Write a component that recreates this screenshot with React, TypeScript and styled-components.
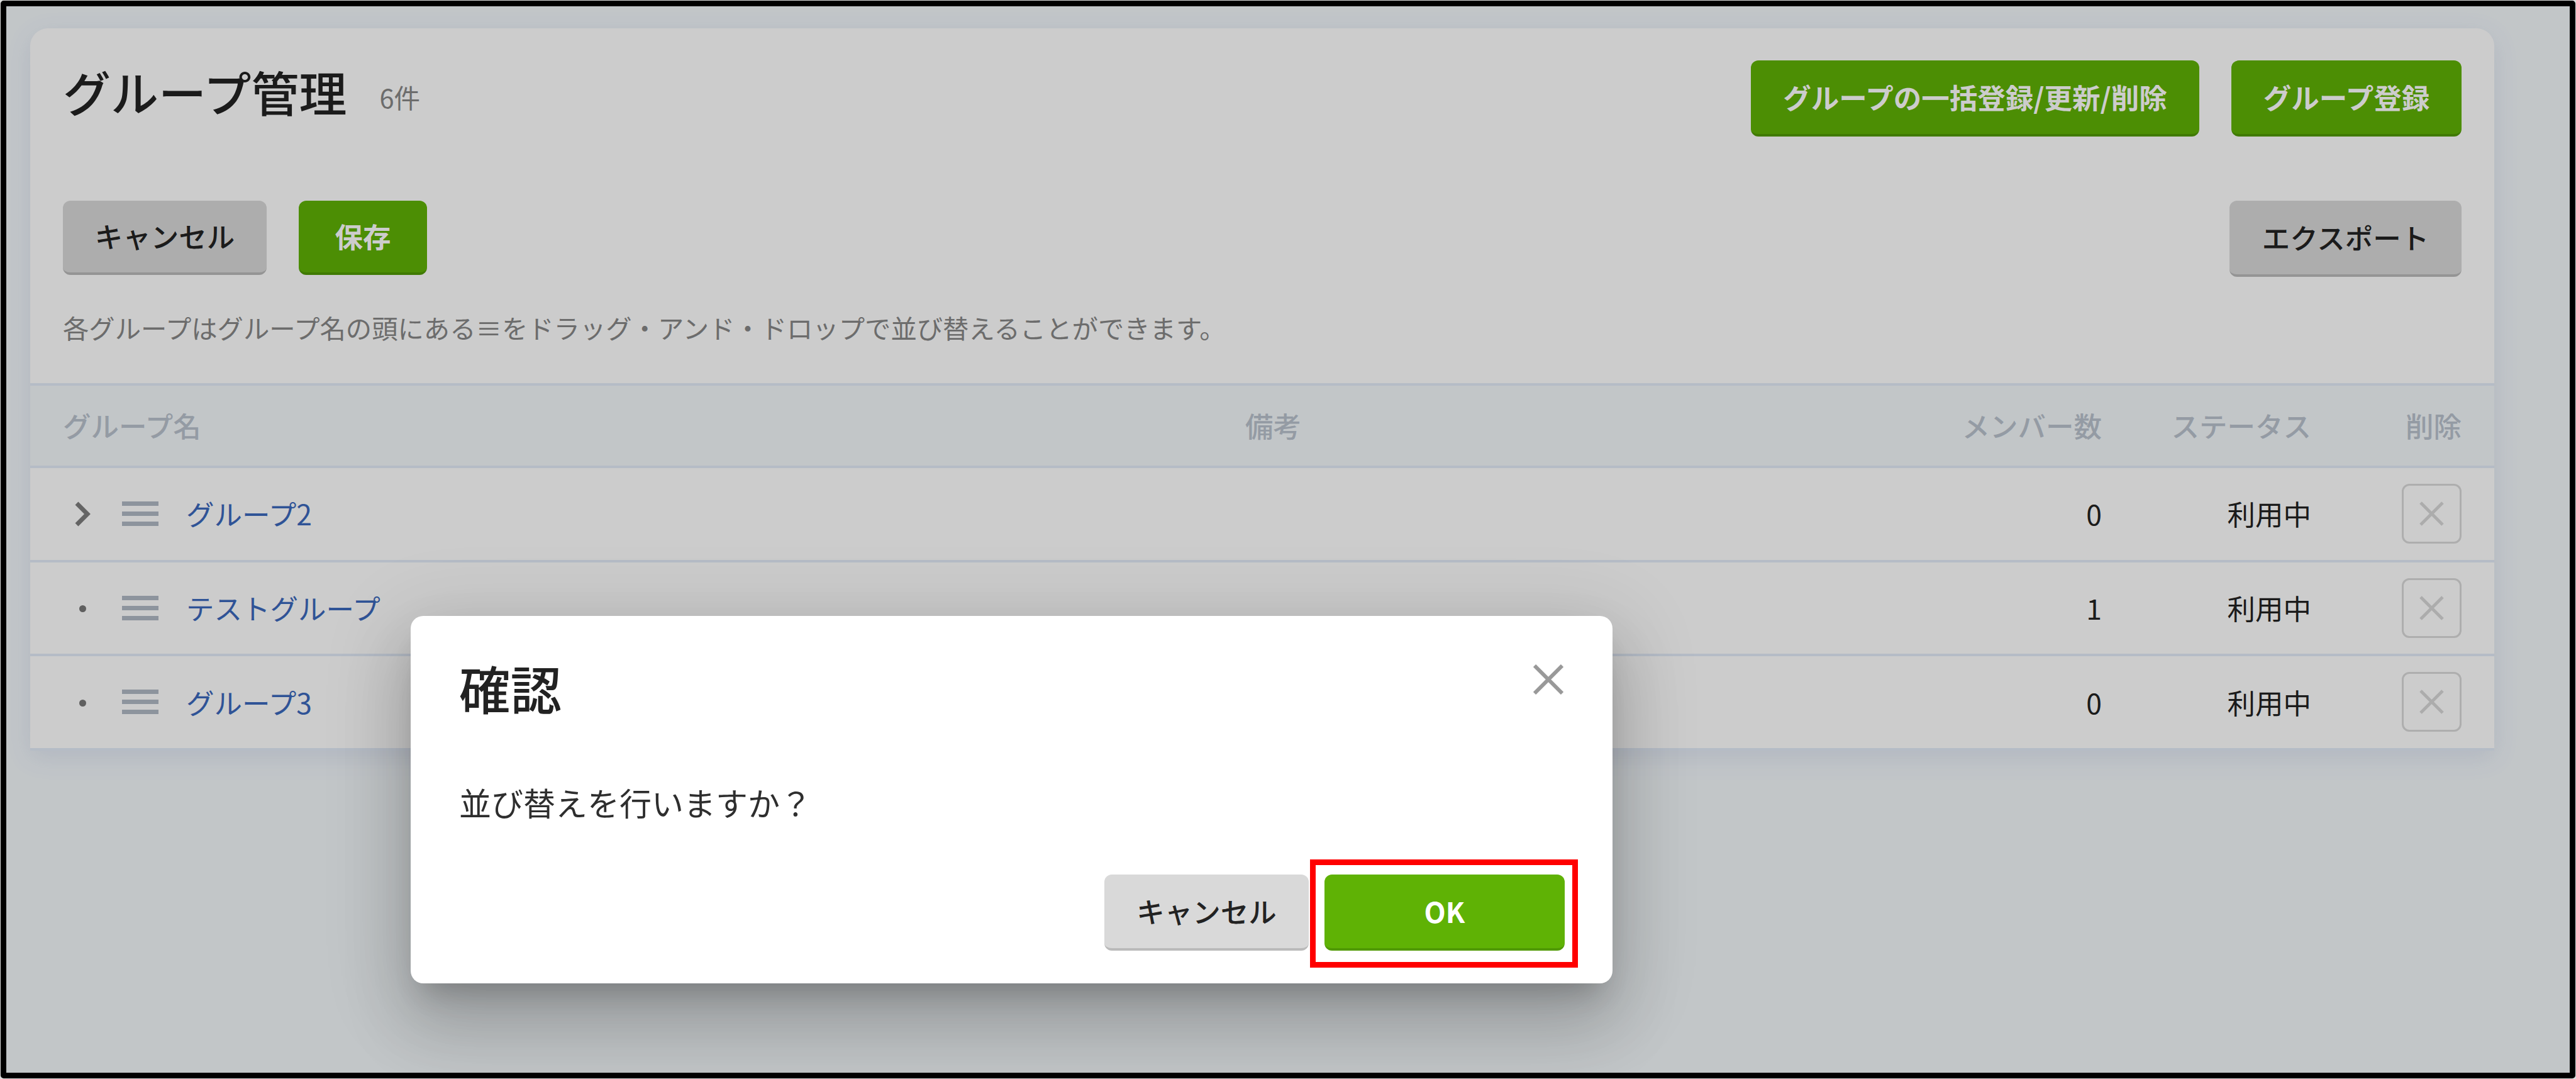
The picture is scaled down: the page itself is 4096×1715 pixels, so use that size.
import styled, { createGlobalStyle, css } from "styled-components";

const GlobalStyle = createGlobalStyle`
  *, *::before, *::after {
    box-sizing: border-box;
  }

  body {
    margin: 0;
    font-family: "Noto Sans CJK JP", "Noto Sans", sans-serif;
    font-size: 44.5px;
    line-height: 1.5;
    color: #222;
    background: #f3f8fb;
  }
`

const Screen = styled.div`
  position: relative;
  width: 4096px;
  height: 1715px;
  padding: 45px 0 0 48px;
  overflow: hidden;
  background: #f3f8fb;
`

const Card = styled.main`
  width: 3918px;
  background: #fff;
  border-radius: 28px 28px 0 0;
  box-shadow: 0 10px 40px rgba(70, 90, 170, 0.12);
`

const CardTop = styled.div`
  display: flex;
  flex-direction: column;
  height: 564px;
  padding: 51px 52px 0;
`

const TitleRow = styled.div`
  display: flex;
  height: 122px;
`

const Title = styled.h1`
  margin: -12px 0 0;
  font-size: 76px;
  font-weight: 500;
  line-height: 122px;
`

const Count = styled.span`
  margin: -3px 0 0 52px;
  font-size: 41.5px;
  line-height: 122px;
  color: #888;
`

const Spacer = styled.div`
  flex: 1;
`

const buttonColors = {
  primary: css`
    color: #fff;
    font-weight: 700;
    background: #5fb205;
    border-bottom-color: #509904;
  `,
  secondary: css`
    color: #222;
    font-weight: 500;
    background: #d9d9d9;
    border-bottom-color: #bababa;
  `,
}

type ButtonProps = Readonly<{
  $variant: "primary" | "secondary"
  $width: number
  $height?: number
}>

const Button = styled.button<ButtonProps>`
  width: ${({ $width }) => $width}px;
  height: ${({ $height }) => $height ?? 121}px;
  padding: 0 0 1px;
  border: 0 solid transparent;
  border-bottom-width: 4px;
  border-radius: 12px;
  font-family: inherit;
  font-size: 44.5px;
  line-height: 1;
  white-space: nowrap;
  ${({ $variant }) => buttonColors[$variant]};
`

const Actions = styled.div`
  display: flex;
  gap: 51px;
`

const Toolbar = styled(Actions)`
  margin-top: 101px;
`

const Hint = styled.p`
  margin: 49px 0 0;
  font-size: 41.35px;
  line-height: 62px;
  color: #888;
`

const columns = css`
  display: grid;
  grid-template-columns: 1880px 1fr 350px 333px 239px;
  align-items: center;
  padding: 0 52px;
`

const HeadRow = styled.div`
  ${columns};
  height: 131px;
  padding-bottom: 1px;
  border-top: 4px solid #e3ecf8;
  font-weight: 500;
  color: #b9c2cd;
  background: #f3f8fb;
`

const Row = styled.div`
  ${columns};
  height: 149.6px;
  border-top: 4px solid #e3ecf8;

  &:last-child {
    height: 153.5px;
    border-bottom: 4px solid #e3ecf8;
  }
`

const Cell = styled.div<{ $right?: boolean }>`
  display: flex;
  align-items: center;
  justify-content: ${({ $right }) => ($right ? "flex-end" : "flex-start")};
`

const Marker = styled.div`
  display: flex;
  align-items: center;
  justify-content: center;
  width: 63px;
  color: #7d7d7d;
`

const Dot = styled.i`
  width: 11px;
  height: 11px;
  margin-top: 3px;
  border-radius: 50%;
  background: #777;
`

const DragHandle = styled.div`
  display: flex;
  flex-direction: column;
  justify-content: space-between;
  width: 58px;
  height: 39px;
  margin: 0 44px 0 31px;

  i {
    height: 7px;
    background: #b1b9c5;
  }
`

const GroupLink = styled.a`
  color: #3b68bc;
`

const DeleteButton = styled.button`
  display: flex;
  align-items: center;
  justify-content: center;
  width: 95px;
  height: 95px;
  padding: 0;
  border: 3px solid #dadada;
  border-radius: 12px;
  background: transparent;
  color: #d8d8d8;
`

const Overlay = styled.div`
  position: absolute;
  inset: 0;
  background: rgba(0, 0, 0, 0.2);
`

const Dialog = styled.section`
  position: absolute;
  top: 979px;
  left: 653px;
  display: flex;
  flex-direction: column;
  width: 1911px;
  height: 584px;
  padding: 66px 76px 52px 77px;
  border-radius: 20px;
  background: #fff;
  box-shadow: 0 31px 42px -20px rgba(0, 0, 0, 0.2), 0 67px 106px 8px rgba(0, 0, 0, 0.14),
    0 25px 128px 22px rgba(0, 0, 0, 0.12);
`

const DialogHead = styled.header`
  display: flex;
  justify-content: space-between;
`

const DialogTitle = styled.h2`
  margin: -8px 0 0;
  font-size: 81.5px;
  font-weight: 500;
  line-height: 110px;
`

const CloseButton = styled.button`
  width: 52px;
  height: 70px;
  padding: 2px 0 0;
  border: 0;
  background: none;
  color: #999;
`

const DialogText = styled.p`
  margin: 90px 0 0;
  font-size: 51px;
  line-height: 76px;
  color: #2e2e2e;
`

const DialogActions = styled.footer`
  display: flex;
  justify-content: flex-end;
  gap: 25px;
  margin-top: auto;
`

const Highlight = styled.div`
  position: absolute;
  top: 387px;
  left: 1430px;
  width: 426px;
  height: 172px;
  border: 9px solid #f00;
  pointer-events: none;
`

const Frame = styled.div`
  position: absolute;
  inset: 1px;
  border: 9px solid #000;
  border-radius: 5px;
  box-shadow: 0 0 0 4px #ddd;
  pointer-events: none;
`

type IconProps = Readonly<{
  size: number
  stroke: number
}>

const Cross = ({ size, stroke }: IconProps) => (
  <svg width={size} height={size} viewBox={`0 0 ${size} ${size}`} fill="none" stroke="currentColor" strokeWidth={stroke}>
    <path d={`M2 2L${size - 2} ${size - 2}M${size - 2} 2L2 ${size - 2}`} />
  </svg>
)

const Chevron = () => (
  <svg width="26" height="40" viewBox="0 0 26 40" fill="none" stroke="currentColor" strokeWidth="7">
    <path d="M3 3L20 20L3 37" />
  </svg>
)

const groups = [
  { name: "グループ2", members: 0, hasChildren: true },
  { name: "テストグループ", members: 1, hasChildren: false },
  { name: "グループ3", members: 0, hasChildren: false },
]

const ConfirmDialog = () => (
  <Dialog>
    <DialogHead>
      <DialogTitle>確認</DialogTitle>
      <CloseButton aria-label="閉じる">
        <Cross size={48} stroke={6} />
      </CloseButton>
    </DialogHead>
    <DialogText>並び替えを行いますか？</DialogText>
    <DialogActions>
      <Button $variant="secondary" $width={325}>キャンセル</Button>
      <Button $variant="primary" $width={382}>OK</Button>
    </DialogActions>
    <Highlight />
  </Dialog>
)

const App = () => {
  return (
    <>
      <GlobalStyle />
      <Screen>
        <Card>
          <CardTop>
            <TitleRow>
              <Title>グループ管理</Title>
              <Count>6件</Count>
              <Spacer />
              <Actions>
                <Button $variant="primary" $width={713}>グループの一括登録/更新/削除</Button>
                <Button $variant="primary" $width={366}>グループ登録</Button>
              </Actions>
            </TitleRow>
            <Toolbar>
              <Button $variant="secondary" $width={324} $height={118}>キャンセル</Button>
              <Button $variant="primary" $width={204} $height={118}>保存</Button>
              <Spacer />
              <Button $variant="secondary" $width={369}>エクスポート</Button>
            </Toolbar>
            <Hint>各グループはグループ名の頭にある≡をドラッグ・アンド・ドロップで並び替えることができます。</Hint>
          </CardTop>
          <HeadRow>
            <Cell>グループ名</Cell>
            <Cell>備考</Cell>
            <Cell $right>メンバー数</Cell>
            <Cell $right>ステータス</Cell>
            <Cell $right>削除</Cell>
          </HeadRow>
          {groups.map(({ name, members, hasChildren }) => (
            <Row key={name}>
              <Cell>
                <Marker>{hasChildren ? <Chevron /> : <Dot />}</Marker>
                <DragHandle><i /><i /><i /></DragHandle>
                <GroupLink>{name}</GroupLink>
              </Cell>
              <Cell />
              <Cell $right>{members}</Cell>
              <Cell $right>利用中</Cell>
              <Cell $right>
                <DeleteButton aria-label="削除">
                  <Cross size={39} stroke={5} />
                </DeleteButton>
              </Cell>
            </Row>
          ))}
        </Card>
        <Overlay />
        <ConfirmDialog />
        <Frame />
      </Screen>
    </>
  )
}

export default App;
